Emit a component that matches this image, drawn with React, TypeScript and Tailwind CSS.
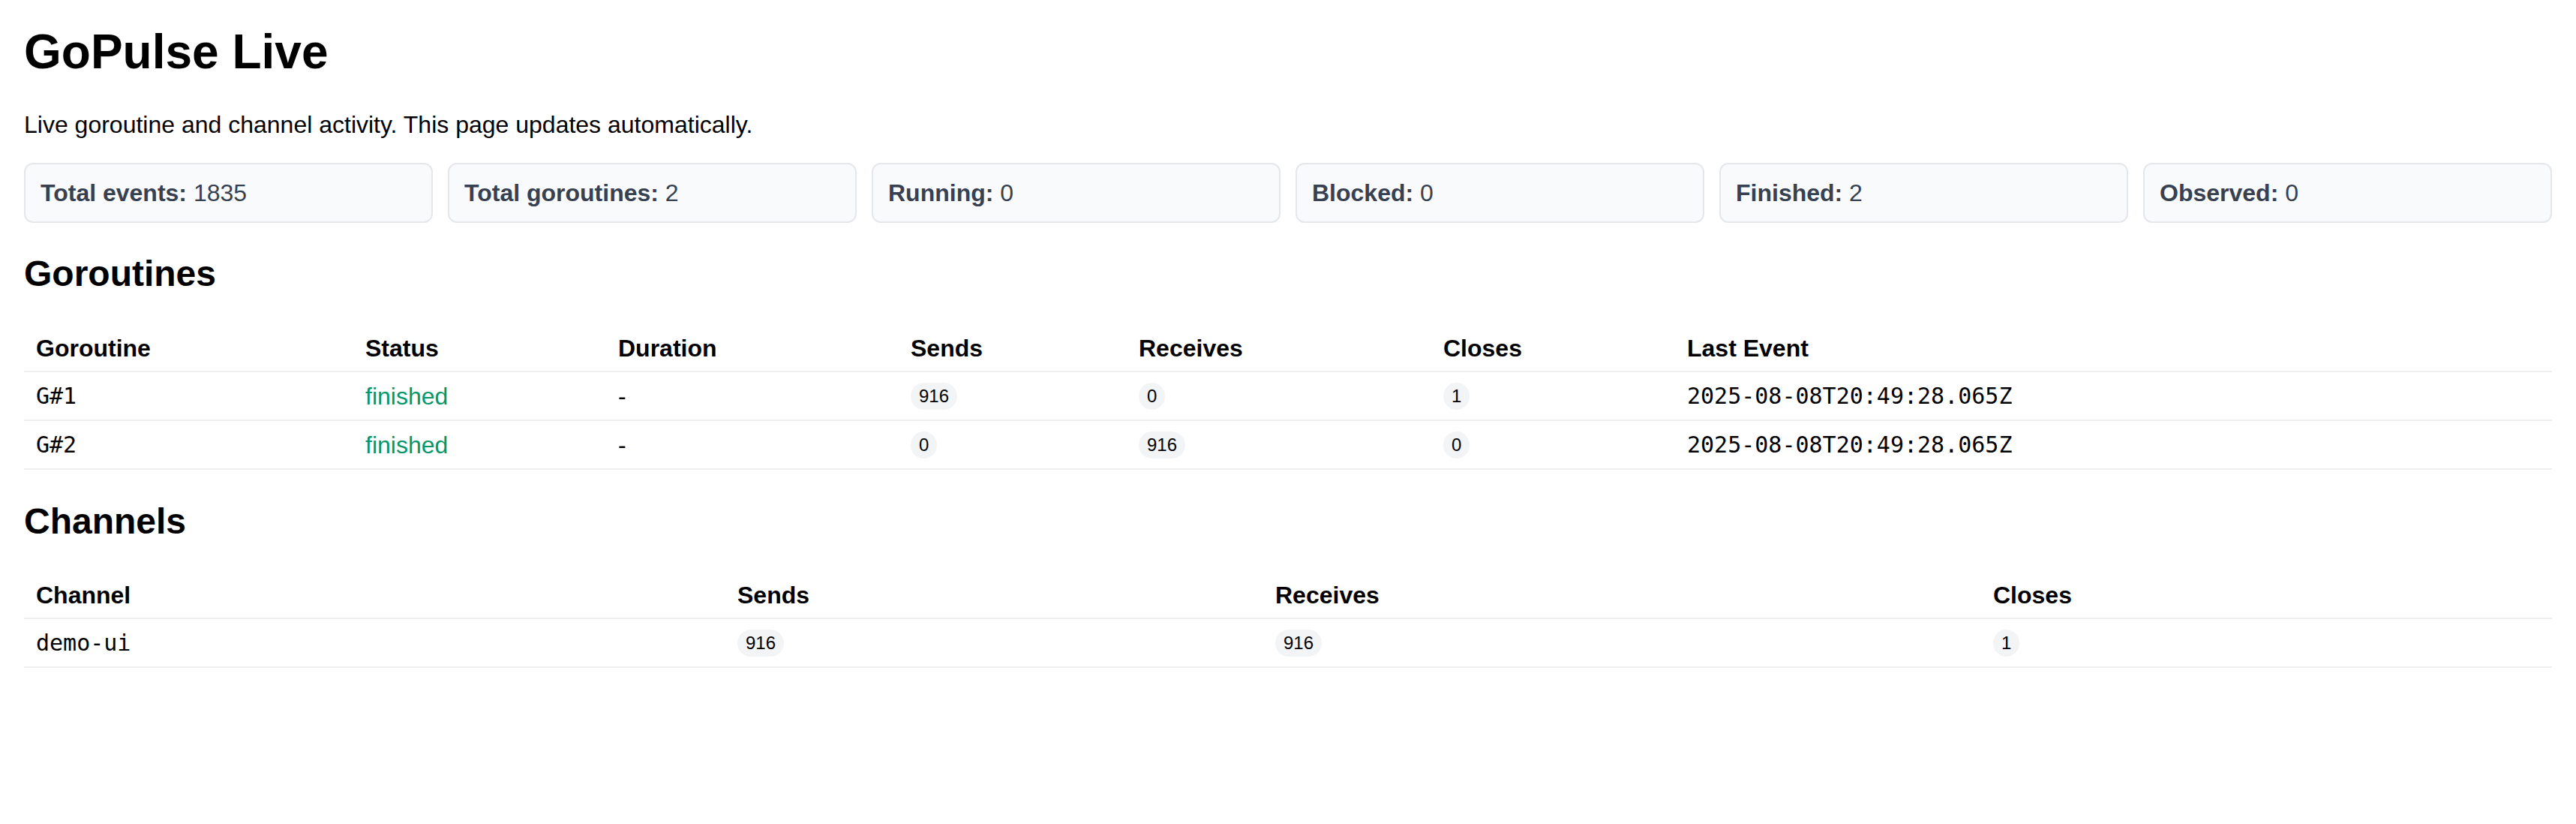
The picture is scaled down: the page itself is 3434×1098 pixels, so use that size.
import React from "react";

const sans = { fontFamily: '"Liberation Sans", Arial, Helvetica, sans-serif' };

const stats: [string, string][] = [
  ["Total events:", "1835"],
  ["Total goroutines:", "2"],
  ["Running:", "0"],
  ["Blocked:", "0"],
  ["Finished:", "2"],
  ["Observed:", "0"],
];

function Pill({ v }: { v: string }) {
  return (
    <span className="inline-block rounded-full bg-[#f3f4f6] px-[11px] py-[6px] text-[24px] leading-[24px] align-middle font-['Liberation_Sans',Arial,sans-serif]">
      {v}
    </span>
  );
}

const th = "text-left font-bold text-[32px] leading-[32px] px-4 pt-4 pb-[14px] border-b-2 border-[#eeeeee]";
const td = "text-left h-[65px] px-4 py-0 align-middle border-b-2 border-[#eeeeee] text-[32px] leading-[32px]";
const mono = "font-['DejaVu_Sans_Mono',monospace] text-[30px] leading-[32px]";

export default function App() {
  return (
    <div className="bg-white text-black p-8 min-h-screen w-full" style={sans}>
      <h1 className="text-[64px] leading-[74px] font-bold">GoPulse Live</h1>
      <p className="mt-[44px] text-[32px] leading-[32px]">
        Live goroutine and channel activity. This page updates automatically.
      </p>
      <div className="mt-[35px] grid grid-cols-6 gap-[20px]">
        {stats.map(([k, v]) => (
          <div
            key={k}
            className="h-[80px] rounded-[12px] border-2 border-[#e5e7eb] bg-[#f9fafb] px-[20px] py-[22px] text-[32px] leading-[32px] text-[#374151]"
          >
            <span className="font-bold">{k}</span> {v}
          </div>
        ))}
      </div>

      <h2 className="mt-[40px] text-[48px] leading-[56px] font-bold">Goroutines</h2>
      <table className="mt-[39px] w-full table-fixed border-collapse">
        <colgroup>
          <col className="w-[439px]" />
          <col className="w-[337px]" />
          <col className="w-[390px]" />
          <col className="w-[304px]" />
          <col className="w-[406px]" />
          <col className="w-[325px]" />
          <col />
        </colgroup>
        <thead>
          <tr>
            <th className={th}>Goroutine</th>
            <th className={th}>Status</th>
            <th className={th}>Duration</th>
            <th className={th}>Sends</th>
            <th className={th}>Receives</th>
            <th className={th}>Closes</th>
            <th className={th}>Last Event</th>
          </tr>
        </thead>
        <tbody>
          {[
            ["G#1", "916", "0", "1"],
            ["G#2", "0", "916", "0"],
          ].map(([g, s, r, c]) => (
            <tr key={g}>
              <td className={td}>
                <span className={mono}>{g}</span>
              </td>
              <td className={td + " text-[#059669]"}>finished</td>
              <td className={td}>-</td>
              <td className={td}>
                <Pill v={s} />
              </td>
              <td className={td}>
                <Pill v={r} />
              </td>
              <td className={td}>
                <Pill v={c} />
              </td>
              <td className={td}>
                <span className={mono}>2025-08-08T20:49:28.065Z</span>
              </td>
            </tr>
          ))}
        </tbody>
      </table>

      <h2 className="mt-[41px] text-[48px] leading-[56px] font-bold">Channels</h2>
      <table className="mt-[38px] w-full table-fixed border-collapse">
        <colgroup>
          <col className="w-[935px]" />
          <col className="w-[717px]" />
          <col className="w-[957px]" />
          <col />
        </colgroup>
        <thead>
          <tr>
            <th className={th}>Channel</th>
            <th className={th}>Sends</th>
            <th className={th}>Receives</th>
            <th className={th}>Closes</th>
          </tr>
        </thead>
        <tbody>
          <tr>
            <td className={td}>
              <span className={mono}>demo-ui</span>
            </td>
            <td className={td}>
              <Pill v="916" />
            </td>
            <td className={td}>
              <Pill v="916" />
            </td>
            <td className={td}>
              <Pill v="1" />
            </td>
          </tr>
        </tbody>
      </table>
    </div>
  );
}
